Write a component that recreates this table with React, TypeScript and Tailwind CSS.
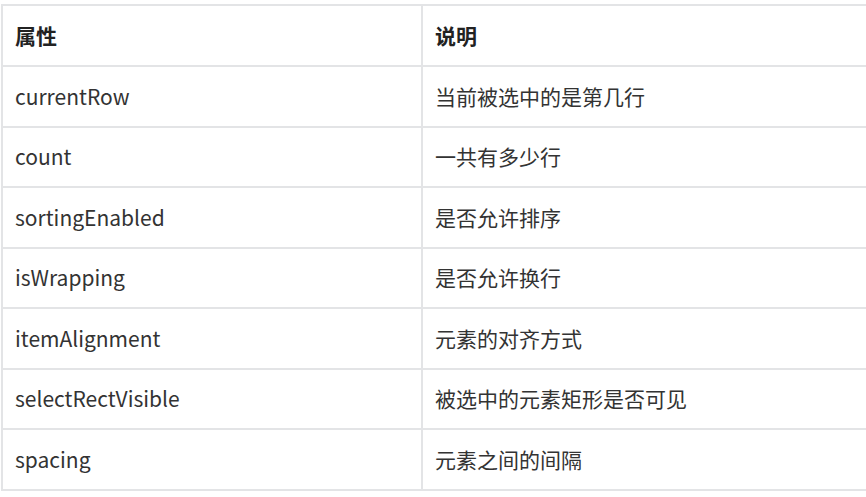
const rows: [string, string][] = [
  ["currentRow", "当前被选中的是第几行"],
  ["count", "一共有多少行"],
  ["sortingEnabled", "是否允许排序"],
  ["isWrapping", "是否允许换行"],
  ["itemAlignment", "元素的对齐方式"],
  ["selectRectVisible", "被选中的元素矩形是否可见"],
  ["spacing", "元素之间的间隔"],
];

export default function App() {
  return (
    <div
      className="w-[866px] h-[497px] overflow-hidden bg-white pt-[4px] pl-[1px]"
      style={{ fontFamily: '"Noto Sans CJK SC", "Noto Sans", sans-serif' }}
    >
      <table className="w-[900px] border-collapse text-[21px] text-[#333]">
        <thead>
          <tr className="h-[61px]">
            <th className="w-[420px] border-2 border-[#e3e4e6] pl-[12px] text-left font-bold text-[#222]">
              属性
            </th>
            <th className="border-2 border-[#e3e4e6] pl-[12px] text-left font-bold text-[#222]">
              说明
            </th>
          </tr>
        </thead>
        <tbody>
          {rows.map(([name, desc], index) => (
            <tr key={index} className="h-[60.5px]">
              <td className="border-2 border-[#e3e4e6] pl-[12px]">{name}</td>
              <td className="border-2 border-[#e3e4e6] pl-[12px]">{desc}</td>
            </tr>
          ))}
        </tbody>
      </table>
    </div>
  );
}
